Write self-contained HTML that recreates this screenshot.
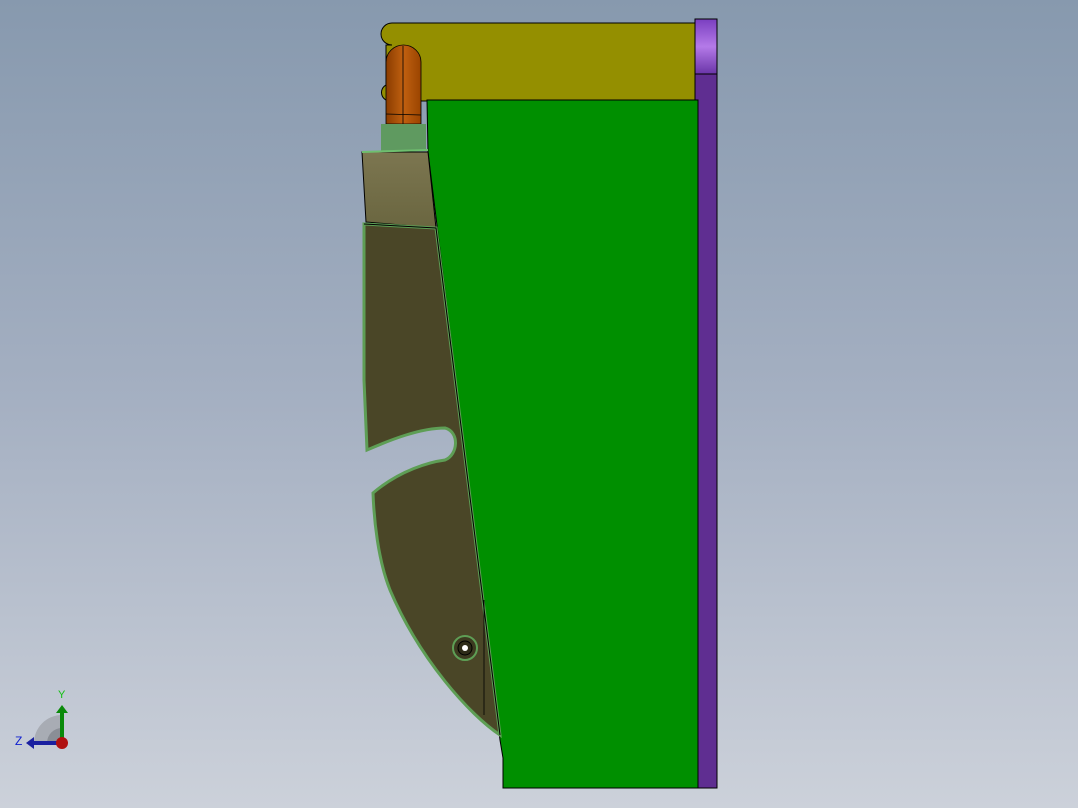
<!DOCTYPE html>
<html><head><meta charset="utf-8"><style>
html,body{margin:0;padding:0;width:1078px;height:808px;overflow:hidden}
body{background:linear-gradient(#8799ae,#a5b0c2 50%,#ccd1da)}
svg{position:absolute;left:0;top:0}
</style></head><body>
<svg width="1078" height="808" viewBox="0 0 1078 808">
<defs>
<linearGradient id="or" x1="0" x2="1"><stop offset="0" stop-color="#8a3c00"/><stop offset="0.5" stop-color="#c06010"/><stop offset="1" stop-color="#9a4400"/></linearGradient>
<linearGradient id="pu" x1="0" y1="0" x2="0" y2="1"><stop offset="0" stop-color="#7a3fc0"/><stop offset="0.5" stop-color="#b47ae8"/><stop offset="1" stop-color="#6a35a8"/></linearGradient>
<linearGradient id="ol" x1="0" y1="0" x2="0" y2="1"><stop offset="0" stop-color="#7c7650"/><stop offset="1" stop-color="#6a6640"/></linearGradient>
</defs>
<!-- yellow bar -->
<path d="M392 23 H696 V101 H390 A8.5 8.5 0 0 1 390 84 H386 V45 H392 A11 11 0 0 1 392 23 Z" fill="#948f00" stroke="#000" stroke-width="1"/>
<!-- purple -->
<rect x="695" y="19" width="22" height="769" fill="#5f2e91" stroke="#000" stroke-width="1"/>
<rect x="695" y="19" width="22" height="55" fill="url(#pu)" stroke="#000" stroke-width="1"/>
<!-- orange -->
<path d="M386 124 V62 A17.5 17 0 0 1 421 62 V124 Z" fill="url(#or)" stroke="#000" stroke-width="0.8"/>
<line x1="403" y1="46" x2="403" y2="124" stroke="#000" stroke-width="0.8"/>
<line x1="386" y1="114" x2="421" y2="115" stroke="#000" stroke-width="0.8"/>
<!-- neck -->
<rect x="381" y="124" width="45" height="27" fill="#5f9a60"/>
<!-- green block -->
<path d="M427 100 H698 V788 H503 V758 L500 740 L428 152 Z" fill="#008f00" stroke="#000" stroke-width="1"/>
<!-- olive top block -->
<path d="M362 152 L428 152 L436 228 L366 222 Z" fill="url(#ol)" stroke="#000" stroke-width="1"/>
<path d="M362 152 L428 150" stroke="#6fbf6f" stroke-width="2"/>
<!-- dark blade -->
<path d="M364 224 L436 228 L500 735 C470 715 420 660 390 590 C378 560 374 520 373 493 C400 470 430 462 445 460 C458 455 460 432 445 428 C420 428 390 440 367 450 L364 380 Z" fill="#4a4627" stroke="#5e9e55" stroke-width="3"/>
<path d="M364 224 L436 228 L500 735" fill="none" stroke="#000" stroke-width="1"/>
<line x1="484" y1="600" x2="484" y2="715" stroke="#000" stroke-width="0.8"/>
<!-- hole -->
<circle cx="465" cy="648" r="12" fill="#3c3a20" stroke="#5e9e55" stroke-width="2"/>
<circle cx="465" cy="648" r="7" fill="#2e2c18" stroke="#000" stroke-width="1"/>
<circle cx="465" cy="648" r="3" fill="#fff"/>
<!-- triad -->
<path d="M62 743 L62 715 A28 28 0 0 0 34 743 Z" fill="#a8acb4"/>
<path d="M62 743 L62 728 A15 15 0 0 0 47 743 Z" fill="#8a8e96"/>
<line x1="62" y1="743" x2="62" y2="712" stroke="#0a8a0a" stroke-width="4"/>
<path d="M56 713 L62 705 L68 713 Z" fill="#0a8a0a"/>
<line x1="62" y1="743" x2="32" y2="743" stroke="#1a20a0" stroke-width="4"/>
<path d="M34 737 L26 743 L34 749 Z" fill="#1a20a0"/>
<circle cx="62" cy="743" r="6" fill="#b01010"/>
<text x="58" y="698" font-family="Liberation Sans, sans-serif" font-size="11" fill="#10c010">Y</text>
<text x="15" y="745" font-family="Liberation Sans, sans-serif" font-size="12" fill="#1020d0">Z</text>
</svg>
</body></html>
